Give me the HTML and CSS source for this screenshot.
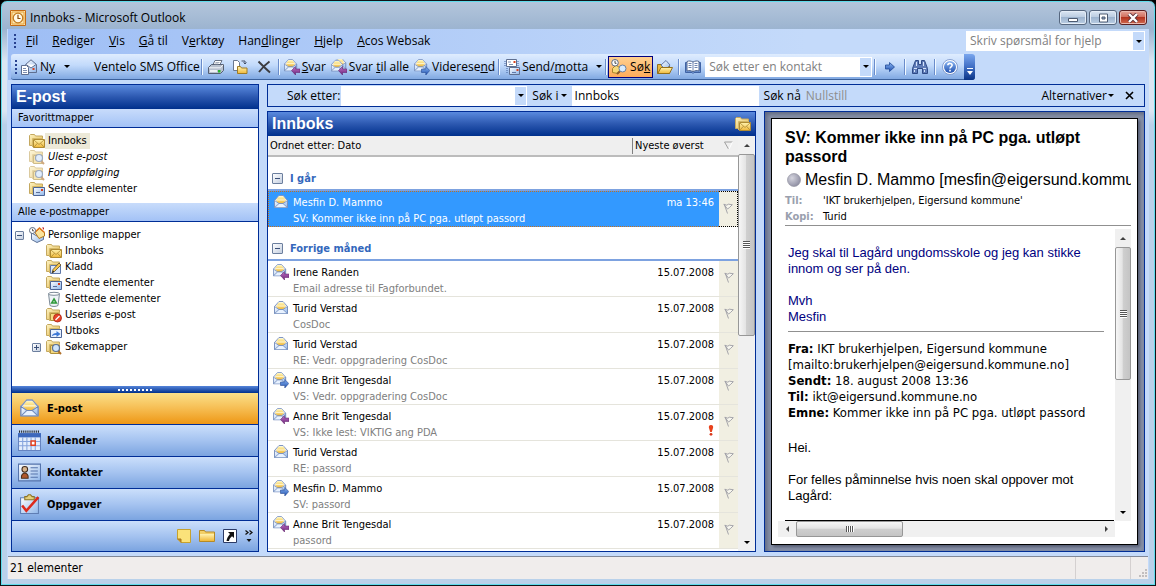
FILE: index.html
```html
<!DOCTYPE html>
<html lang="no">
<head>
<meta charset="utf-8">
<title>Innboks - Microsoft Outlook</title>
<link rel="stylesheet" href="styles.css">
</head>
<body>
<svg class="defs" aria-hidden="true">
  <defs>
    <linearGradient id="gFold" x1="0" y1="0" x2="1" y2="1"><stop offset="0" stop-color="#fdf3c4"/><stop offset="1" stop-color="#e5b94b"/></linearGradient>
    <linearGradient id="gGold" x1="0" y1="0" x2="0" y2="1"><stop offset="0" stop-color="#fff3b0"/><stop offset="1" stop-color="#f0b83a"/></linearGradient>
    <linearGradient id="gEnv" x1="0" y1="0" x2="1" y2="1"><stop offset="0" stop-color="#ffffff"/><stop offset="1" stop-color="#8fb6ea"/></linearGradient>
    <linearGradient id="gBlue" x1="0" y1="0" x2="0" y2="1"><stop offset="0" stop-color="#8db8f4"/><stop offset="1" stop-color="#1e4fae"/></linearGradient>
    <linearGradient id="gPurp" x1="0" y1="0" x2="0" y2="1"><stop offset="0" stop-color="#c078c8"/><stop offset="1" stop-color="#6c1f78"/></linearGradient>
    <radialGradient id="gBall" cx=".35" cy=".35" r=".7"><stop offset="0" stop-color="#d4d4de"/><stop offset="1" stop-color="#8e8ea2"/></radialGradient>
  </defs>
  <symbol id="folder" viewBox="0 0 16 16"><path d="M.5 12.500V2.500L1.500 1.500H5.500L6.500 3H13.500V12.500Z" fill="url(#gFold)" stroke="#c4a860"/><path d="M3.500 14V5.500H14" fill="none" stroke="#d4b868"/></symbol>
  <symbol id="f-mail" viewBox="0 0 16 16"><use href="#folder"/><path d="M4.500 6.500h11v8h-11z" fill="url(#gGold)" stroke="#b08c34"/><path d="M5 7l5 4.500L15 7M5 14.200l3.500-4M15 14.200l-3.500-4" fill="none" stroke="#b08c34" stroke-width=".8"/></symbol>
  <symbol id="f-sent" viewBox="0 0 16 16"><use href="#folder"/><path d="M4.500 6.500h11v8h-11z" fill="url(#gEnv)" stroke="#4d6596"/><path d="M12 8h2v2h-2z" fill="#d83a1e"/><path d="M7 11.500h4" stroke="#5b6f9c"/></symbol>
  <symbol id="f-out" viewBox="0 0 16 16"><use href="#folder"/><path d="M4.500 6.500h11v8h-11z" fill="#eaf2ff" stroke="#4d6596"/><path d="M5.500 13.500c1-3 2.500-3.500 5-3.500V8l4 3-4 3v-2c-2 0-3.500 0-5 1.500z" fill="#3d78d8"/></symbol>
  <symbol id="f-draft" viewBox="0 0 16 16"><use href="#folder"/><path d="M4.500 6.500h10v8h-10z" fill="#dbe7fb" stroke="#6078a8"/><path d="M6 14l1-3.500L13 4l2 2-6.500 6.500z" fill="#f7c64c" stroke="#5c4a2a" stroke-width=".8"/><path d="M6 14l1-2.500 1.300 1.300z" fill="#222"/></symbol>
  <symbol id="f-junk" viewBox="0 0 16 16"><use href="#folder"/><path d="M4.500 6.500h8v7h-8z" fill="#f7dc85" stroke="#b0923c"/><circle cx="11.500" cy="11" r="4" fill="#e8452a" stroke="#a82210" stroke-width=".8"/><path d="M9.500 13l4-4" stroke="#fff" stroke-width="1.300"/></symbol>
  <symbol id="f-find" viewBox="0 0 16 16"><use href="#folder"/><path d="M4.500 6.500h9v8h-9z" fill="#f3d780" stroke="#b0923c"/><path d="M12 12l3 3" stroke="#b0702a" stroke-width="2"/><circle cx="10" cy="9" r="3.500" fill="#cfe4fb" stroke="#5c7296" stroke-width="1.200"/></symbol>
  <symbol id="bin" viewBox="0 0 16 16"><path d="M2.500 2.500l1.500 12c2 1.300 6 1.300 8 0l1.500-12z" fill="#eef3f7" stroke="#7d8b98"/><ellipse cx="8" cy="2.800" rx="5.500" ry="1.500" fill="#fff" stroke="#7d8b98"/><path d="M8 8l2.300 4H5.700z" fill="none" stroke="#2f9a3a" stroke-width="1.600"/></symbol>
  <symbol id="home" viewBox="0 0 16 16"><path d="M2.500 6L8 9l6.500-3v6.500L8 15.500l-5.500-3z" fill="url(#gEnv)" stroke="#5f7396"/><path d="M6 5.500L10.500 1.500 15.500 5.500V9L10 11.500z" fill="#fbe39a" stroke="#b37a1e"/><path d="M5.500 5.500L10.500 1l5 4.500" fill="none" stroke="#e2761e" stroke-width="1.400"/><path d="M13 .5h2V3z" fill="#c02020"/><circle cx="3.500" cy="3.500" r="3" fill="#fff" stroke="#5c6a80"/><path d="M3.500 1.800v2H5" fill="none" stroke="#333" stroke-width=".8"/></symbol>
  <symbol id="env" viewBox="0 0 16 16"><path d="M1.500 6.500L6 1.500h4l4.500 5v7h-13z" fill="#f2f7ff" stroke="#7f96c4"/><path d="M3 6.500l2.500-4h5l2.500 4-3 3H6z" fill="url(#gGold)"/><path d="M3.500 6h9" stroke="#fff8d8"/><path d="M1.500 6.500L6 9.500h4l4.500-3v7h-13z" fill="url(#gEnv)" stroke="#6f88b8" stroke-width=".8"/><path d="M2 13.200L6 9.500h4l4 3.700" fill="#e8f2ff" stroke="#6f88b8" stroke-width=".8"/></symbol>
  <symbol id="env-re" viewBox="0 0 16 16"><svg x="-1" y="-1" width="15" height="15"><use href="#env"/></svg><path d="M7.500 11.500l4-4v2.500H16v3.500h-4.500V16z" fill="url(#gPurp)" stroke="#5a1666" stroke-width=".5"/></symbol>
  <symbol id="env-all" viewBox="0 0 16 16"><svg x="2" y="-2" width="14" height="14"><use href="#env"/></svg><svg x="-1" y="0" width="14" height="14"><use href="#env"/></svg><path d="M7.500 11.500l4-4v2.500H16v3.500h-4.500V16z" fill="url(#gPurp)" stroke="#5a1666" stroke-width=".5"/></symbol>
  <symbol id="env-fw" viewBox="0 0 16 16"><svg x="-1" y="-1" width="15" height="15"><use href="#env"/></svg><path d="M15.800 11.500l-4-4v2.500H7.500v3.500h4.300V16z" fill="url(#gBlue)" stroke="#163a86" stroke-width=".5"/></symbol>
  <symbol id="new" viewBox="0 0 16 16"><path d="M4.500 5.500L10 .8l5.500 4.700V13.500h-11z" fill="url(#gEnv)" stroke="#5f6f90"/><path d="M5 5.500l5 3.500 5-3.500" fill="#fff" stroke="#5f6f90"/><path d="M11.500 9h2v2h-2z" fill="#d8431e"/><path d="M.5 6.500h5l2 2v7h-7z" fill="#fff" stroke="#5f6f90"/><path d="M2 9.500h3M2 11.500h4M2 13.500h4" stroke="#7d8db0"/></symbol>
  <symbol id="print" viewBox="0 0 16 16"><path d="M4.500 6.500L7 1.500h7l-2.500 5z" fill="#fff" stroke="#6a7488"/><path d="M.5 8.500l3-3H15.500v6l-3 3H.5z" fill="#b9c1cf" stroke="#555f72"/><path d="M1 8.800h11.500l2.500-3" fill="none" stroke="#f4f6fa"/><path d="M2 12h7" stroke="#fff" stroke-width="1.500"/><path d="M10 11h2.500v2.500H10z" fill="#28b52c"/><path d="M7.500 3.500h4M6.500 5h4" stroke="#8f98aa" stroke-width=".8"/></symbol>
  <symbol id="move" viewBox="0 0 16 16"><path d="M1.500 1.500h4l2 2v8h-6z" fill="#fff" stroke="#6a7890"/><path d="M9.500 2h3.500v3M11.500 3.500l1.500 1.500L14.500 3.500" fill="none" stroke="#44506a"/><path d="M5.500 14.500v-7h3l1 1.500h5.500v5.500z" fill="url(#gGold)" stroke="#a07c24"/></symbol>
  <symbol id="del" viewBox="0 0 16 16"><path d="M2.500 2.500C6 6 10 10 14 13.500M13.500 2.500C10 5 6 9 3 13" stroke="#3c3c40" stroke-width="1.900" fill="none"/></symbol>
  <symbol id="sendrec" viewBox="0 0 16 16"><path d="M2.500 .5h10v7h-10z" fill="#fff" stroke="#5f6f90"/><path d="M9.500 2h2v2h-2z" fill="#d8431e"/><path d="M5 5.500h4M4 3h3" stroke="#8090b0"/><path d="M5.500 8.500h10v7h-10z" fill="url(#gEnv)" stroke="#5f6f90"/><path d="M12.500 10h2v2h-2z" fill="#d8431e"/><path d="M8 13.500h4" stroke="#6078a8"/><path d="M1 2v6M3 9v6M14 2v5" stroke="#3f5f9e" stroke-dasharray="1 1"/></symbol>
  <symbol id="find" viewBox="0 0 16 16"><path d="M1.500 9.500L5 6l4 3v4l-2 1.500-5.500-1z" fill="#f7d978" stroke="#a8842a"/><circle cx="4" cy="3.800" r="3.300" fill="#fff" stroke="#5c6a80"/><path d="M4 1.800v2.500h1.500" fill="none" stroke="#333" stroke-width=".9"/><path d="M9 12l-3 3" stroke="#8c5c2a" stroke-width="2"/><circle cx="11.500" cy="9.500" r="3.500" fill="#d8ecff" stroke="#6a80a0"/></symbol>
  <symbol id="open" viewBox="0 0 16 16"><path d="M.5 14.500v-9h4l1 1.500h7v7.500z" fill="#e8b840" stroke="#94701c"/><path d="M4 6l5-4.500L13 6l-4 5z" fill="url(#gEnv)" stroke="#6078a8"/><path d="M.8 14.500L4 8.500H15.500l-3 6z" fill="url(#gGold)" stroke="#94701c"/></symbol>
  <symbol id="book" viewBox="0 0 16 16"><path d="M.5 3.500h15v10H9L8 14.500 7 13.500H.5z" fill="#6a90d0" stroke="#3f62a4"/><path d="M2 2.500c2-1 4-.5 6 .5 2-1 4-1.500 6-.5v9.500c-2-.8-4-.5-6 .8-2-1.300-4-1.600-6-.8z" fill="#fff" stroke="#55698f"/><path d="M8 3v9.500M3.500 4.500h3M3.500 6.500h3M3.500 8.500h3M9.500 4.500h3M9.500 6.500h3M9.500 8.500h3" stroke="#6078a8" stroke-width=".9"/></symbol>
  <symbol id="go" viewBox="0 0 16 16"><path d="M3.500 6h4V3.500l5 4.500-5 4.500V10h-4z" fill="url(#gBlue)" stroke="#1e4796" stroke-width=".8"/></symbol>
  <symbol id="bino" viewBox="0 0 16 16"><path d="M3.500 1.500h3v4h3v-4h3l3 8v5h-5v-5h-5v5h-5v-5z" fill="#5f7cb8" stroke="#2f4a86"/><path d="M2 9.500h3M11 9.500h3M4.500 3v4M11.500 3v4M2.500 11v2M12.500 11v2" stroke="#d4e2fa"/></symbol>
  <symbol id="help" viewBox="0 0 16 16"><circle cx="8" cy="8" r="7.500" fill="#fff" stroke="#6f8cc4" stroke-width=".8"/><circle cx="8" cy="8" r="6" fill="url(#gBlue)"/><path d="M5.800 6.300c.2-2.600 4.400-2.400 4.300 0 0 1.500-2.100 1.500-2.100 3.200M8 10.800v1.600" fill="none" stroke="#fff" stroke-width="1.600"/></symbol>
  <symbol id="app" viewBox="0 0 16 16"><path d="M.5 .5h15v15H.5z" fill="#fbe6b0" stroke="#c46a14"/><path d="M2 2h12v12H2z" fill="none" stroke="#e9a13a"/><circle cx="8" cy="8" r="4.800" fill="#fff8e6" stroke="#c27a1e" stroke-width="1.300"/><path d="M8 4.800V8.500h2.500" fill="none" stroke="#8a4f10" stroke-width="1.200"/></symbol>
  <symbol id="flag" viewBox="0 0 10 12"><path d="M.8 2.200l3 1 1.500-1 4 .5-3 3-1.800 1.300zM1.500 3l3 8.500" fill="#f7f6ee" stroke="#9c9ca4" stroke-width=".9"/></symbol>
  <symbol id="cal" viewBox="0 0 22 20"><path d="M.5 3.500h21v16H.5z" fill="#e4eefc" stroke="#6684c0"/><path d="M0 3h22v4H0z" fill="#3d68bc"/><path d="M1 1.500h20" stroke="#222" stroke-width="2" stroke-dasharray="1 1"/><path d="M1 11h20M1 15h20M4.500 7v12M8.500 7v12M12.500 7v12M16.500 7v12" stroke="#86a4dc"/><path d="M12.500 10.500h4v4h-4z" fill="#fff" stroke="#e2401e" stroke-width="1.400"/></symbol>
  <symbol id="card" viewBox="0 0 22 18"><path d="M.5 1h21v16H.5z" fill="url(#gEnv)" stroke="#5674ac"/><circle cx="6.500" cy="6" r="2.700" fill="#d8b48c" stroke="#402a1c"/><path d="M3.300 14.500c-.8-6.500 7.200-6.500 6.400 0z" fill="#b0582c" stroke="#50301c"/><path d="M12 4.500h7M12 7.500h7M12 10.500h7M12 13.500h7" stroke="#5674ac"/></symbol>
  <symbol id="task" viewBox="0 0 20 20"><path d="M1.500 3.500h17v15h-17z" fill="url(#gEnv)" stroke="#5f7db4"/><path d="M5.500 5.500V2.500h2L9 .8h2l1.500 1.700h2v3z" fill="#e4cf7c" stroke="#8c7426"/><path d="M3 11l4 5L18.500 3" fill="none" stroke="#dd2a1c" stroke-width="2.400"/></symbol>
  <symbol id="note" viewBox="0 0 14 14"><path d="M.5 .5h13v13H4L.5 10z" fill="#fbe27a" stroke="#c7a22e"/><path d="M.5 10H4v3.500" fill="#c48a1c" stroke="#a8781c"/></symbol>
  <symbol id="fold2" viewBox="0 0 16 14"><path d="M.5 12.500v-11h5l1 1.500h9v9.500z" fill="#f2cf68" stroke="#b58a26"/><path d="M1 5h14v7H1z" fill="url(#gGold)"/></symbol>
  <symbol id="short" viewBox="0 0 14 14"><path d="M.5 .5h13v13H.5z" fill="#fff" stroke="#2b3a66"/><path d="M5 3h6v6L9 7.300C7 9 6.500 10 6 12H3.500C4 9 5 7.500 7 5z" fill="#111"/></symbol>
</svg>

<div class="window">
  <header class="titlebar">
    <svg class="i16"><use href="#app"/></svg>
    <h1 class="title">Innboks - Microsoft Outlook</h1>
    <div class="winbtns">
      <button class="wb" aria-label="Minimer"><svg viewBox="0 0 12 10"><path d="M1.500 5.500h9v3h-9z" fill="#fff" stroke="#4c5a70"/></svg></button>
      <button class="wb" aria-label="Gjenopprett"><svg viewBox="0 0 12 10"><path d="M2.500 1h8v8h-8z" fill="#fff" stroke="#4c5a70"/><path d="M5 4h3v2H5z" fill="#8fa6c4" stroke="#4c5a70"/></svg></button>
      <button class="wb close" aria-label="Lukk"><svg viewBox="0 0 12 10"><path d="M2 1l8 8M10 1L2 9" stroke="#5c3038" stroke-width="4"/><path d="M2 1l8 8M10 1L2 9" stroke="#fff" stroke-width="2.400"/></svg></button>
    </div>
  </header>

  <div class="client">
    <div class="menurow">
      <nav class="menu">
        <span class="grip"></span>
        <button><u>F</u>il</button><button><u>R</u>ediger</button><button><u>V</u>is</button><button><u>G</u>å til</button><button>V<u>e</u>rktøy</button><button>Han<u>d</u>linger</button><button><u>H</u>jelp</button><button><u>A</u>cos Websak</button>
      </nav>
      <div class="combo helpbox"><input type="text" aria-label="Hjelp" placeholder="Skriv spørsmål for hjelp"><button aria-label="Vis liste"><i class="dn"></i></button></div>
    </div>

    <div class="toolbar">
      <span class="grip"></span>
      <button class="tb new"><svg class="i16"><use href="#new"/></svg><span>N<u>y</u></span><i class="dn"></i></button>
      <button class="tb sms">Ventelo SMS Office</button>
      <span class="sep"></span>
      <button class="tb" aria-label="Skriv ut"><svg class="i16"><use href="#print"/></svg></button>
      <button class="tb" aria-label="Flytt"><svg class="i16"><use href="#move"/></svg></button>
      <button class="tb" aria-label="Slett"><svg class="i16"><use href="#del"/></svg></button>
      <span class="sep wide"></span>
      <button class="tb txt"><svg class="i16"><use href="#env-re"/></svg><span><u>S</u>var</span></button>
      <button class="tb txt"><svg class="i16"><use href="#env-all"/></svg><span>Svar <u>t</u>il alle</span></button>
      <button class="tb txt"><svg class="i16"><use href="#env-fw"/></svg><span>Viderese<u>n</u>d</span></button>
      <span class="sep"></span>
      <button class="tb txt"><svg class="i16"><use href="#sendrec"/></svg><span>Send/<u>m</u>otta</span><i class="dn"></i></button>
      <span class="sep"></span>
      <button class="tb on"><svg class="i16"><use href="#find"/></svg><span>Sø<u>k</u></span></button>
      <button class="tb" aria-label="Åpne"><svg class="i16"><use href="#open"/></svg></button>
      <span class="sep"></span>
      <button class="tb" aria-label="Adressebok"><svg class="i16"><use href="#book"/></svg></button>
      <div class="combo contact"><input type="text" aria-label="Kontakt" placeholder="Søk etter en kontakt"><button aria-label="Vis liste"><i class="dn"></i></button></div>
      <span class="sep"></span>
      <button class="tb" aria-label="Gå"><svg class="i16"><use href="#go"/></svg></button>
      <span class="sep"></span>
      <button class="tb" aria-label="Finn"><svg class="i16"><use href="#bino"/></svg></button>
      <span class="sep"></span>
      <button class="tb" aria-label="Hjelp"><svg class="i16"><use href="#help"/></svg></button>
      <button class="cap" aria-label="Alternativer for verktøylinje"><svg viewBox="0 0 8 10"><path d="M1 1.500h6" stroke="#fff"/><path d="M1 4h6L4 8z" fill="#fff"/></svg></button>
    </div>

    <main class="main">
      <aside class="nav">
        <h2 class="bar">E-post</h2>
        <h3 class="sub">Favorittmapper</h3>
        <ul class="tree fav">
          <li class="sel"><svg class="i16"><use href="#f-mail"/></svg><a href="#">Innboks</a></li>
          <li class="dim"><svg class="i16"><use href="#f-find"/></svg><a href="#">Ulest e-post</a></li>
          <li class="dim"><svg class="i16"><use href="#f-find"/></svg><a href="#">For oppfølging</a></li>
          <li><svg class="i16"><use href="#f-sent"/></svg><a href="#">Sendte elementer</a></li>
        </ul>
        <h3 class="sub">Alle e-postmapper</h3>
        <ul class="tree all">
          <li class="root"><button class="pm" aria-label="Skjul"></button><svg class="i16"><use href="#home"/></svg><a href="#">Personlige mapper</a></li>
          <li><svg class="i16"><use href="#f-mail"/></svg><a href="#">Innboks</a></li>
          <li><svg class="i16"><use href="#f-draft"/></svg><a href="#">Kladd</a></li>
          <li><svg class="i16"><use href="#f-sent"/></svg><a href="#">Sendte elementer</a></li>
          <li><svg class="i16"><use href="#bin"/></svg><a href="#">Slettede elementer</a></li>
          <li><svg class="i16"><use href="#f-junk"/></svg><a href="#">Useriøs e-post</a></li>
          <li><svg class="i16"><use href="#f-out"/></svg><a href="#">Utboks</a></li>
          <li class="exp"><button class="pm plus" aria-label="Vis"></button><svg class="i16"><use href="#f-find"/></svg><a href="#">Søkemapper</a></li>
        </ul>
        <div class="split"><span></span></div>
        <button class="mod active"><svg><use href="#env"/></svg>E-post</button>
        <button class="mod"><svg><use href="#cal"/></svg>Kalender</button>
        <button class="mod"><svg><use href="#card"/></svg>Kontakter</button>
        <button class="mod"><svg><use href="#task"/></svg>Oppgaver</button>
        <div class="modfoot">
          <button aria-label="Notater"><svg width="14" height="14"><use href="#note"/></svg></button>
          <button aria-label="Mappeliste"><svg width="16" height="14"><use href="#fold2"/></svg></button>
          <button aria-label="Snarveier"><svg width="14" height="14"><use href="#short"/></svg></button>
          <button aria-label="Konfigurer"><svg width="8" height="14" viewBox="0 0 8 14"><path d="M.5 1.500l2.500 2-2.500 2M4.500 1.500l2.500 2-2.500 2" fill="none" stroke="#111" stroke-width="1.300"/><path d="M1.500 10h5L4 13z" fill="#111"/></svg></button>
        </div>
      </aside>

      <section class="right">
        <form class="search">
          <label for="q">Søk etter:</label>
          <div class="combo q"><input id="q" type="text"><button type="button" aria-label="Vis liste"><i class="dn"></i></button></div>
          <label for="in" class="inl">Søk i<i class="dn"></i></label>
          <input id="in" class="scope" type="text" value="Innboks">
          <button type="button">Søk nå</button>
          <button type="button" disabled>Nullstill</button>
          <button type="button" class="opts">Alternativer<i class="dn"></i></button>
          <button type="button" class="x" aria-label="Lukk søk"><svg width="9" height="9" viewBox="0 0 9 9"><path d="M1 1l7 7M8 1L1 8" stroke="#000" stroke-width="1.600"/></svg></button>
        </form>

        <div class="panes">
          <section class="list">
            <h2 class="bar">Innboks<svg class="i16"><use href="#f-mail"/></svg></h2>
            <div class="listbody">
              <div class="cols">
                <div class="sort"><button>Ordnet etter: Dato</button><button class="newest">Nyeste øverst<svg width="9" height="9" viewBox="0 0 9 9"><path d="M8.500 1h-8L4.500 8" fill="none" stroke="#a0a0a0"/><path d="M5 8L8.500 1" stroke="#fff"/></svg></button></div>
                <h3 class="group"><button class="pm" aria-label="Skjul"></button>I går</h3>
                <ul class="msgs">
                  <li class="msg cur"><svg class="i16"><use href="#env"/></svg><a href="#"><b>Mesfin D. Mammo</b><time>ma 13:46</time><span>SV: Kommer ikke inn på PC pga. utløpt passord</span></a><button class="fl" aria-label="Flagg"><svg><use href="#flag"/></svg></button></li>
                </ul>
                <h3 class="group"><button class="pm" aria-label="Skjul"></button>Forrige måned</h3>
                <ul class="msgs">
                  <li class="msg"><svg class="i16"><use href="#env-re"/></svg><a href="#"><b>Irene Randen</b><time>15.07.2008</time><span>Email adresse til Fagforbundet.</span></a><button class="fl" aria-label="Flagg"><svg><use href="#flag"/></svg></button></li>
                  <li class="msg"><svg class="i16"><use href="#env"/></svg><a href="#"><b>Turid Verstad</b><time>15.07.2008</time><span>CosDoc</span></a><button class="fl" aria-label="Flagg"><svg><use href="#flag"/></svg></button></li>
                  <li class="msg"><svg class="i16"><use href="#env"/></svg><a href="#"><b>Turid Verstad</b><time>15.07.2008</time><span>RE: Vedr. oppgradering CosDoc</span></a><button class="fl" aria-label="Flagg"><svg><use href="#flag"/></svg></button></li>
                  <li class="msg"><svg class="i16"><use href="#env-fw"/></svg><a href="#"><b>Anne Brit Tengesdal</b><time>15.07.2008</time><span>VS: Vedr. oppgradering CosDoc</span></a><button class="fl" aria-label="Flagg"><svg><use href="#flag"/></svg></button></li>
                  <li class="msg"><svg class="i16"><use href="#env-re"/></svg><a href="#"><b>Anne Brit Tengesdal</b><time>15.07.2008</time><span>VS: Ikke lest: VIKTIG ang PDA</span><svg class="imp" viewBox="0 0 6 11"><path d="M3 0C5 0 5.500 1.500 5 3L3.800 7H2.200L1 3C.5 1.500 1 0 3 0z" fill="#e8421c"/><circle cx="3" cy="9.300" r="1.400" fill="#d8381c"/></svg></a><button class="fl" aria-label="Flagg"><svg><use href="#flag"/></svg></button></li>
                  <li class="msg"><svg class="i16"><use href="#env"/></svg><a href="#"><b>Turid Verstad</b><time>15.07.2008</time><span>RE: passord</span></a><button class="fl" aria-label="Flagg"><svg><use href="#flag"/></svg></button></li>
                  <li class="msg"><svg class="i16"><use href="#env-fw"/></svg><a href="#"><b>Mesfin D. Mammo</b><time>15.07.2008</time><span>SV: passord</span></a><button class="fl" aria-label="Flagg"><svg><use href="#flag"/></svg></button></li>
                  <li class="msg"><svg class="i16"><use href="#env-re"/></svg><a href="#"><b>Anne Brit Tengesdal</b><time>15.07.2008</time><span>passord</span></a><button class="fl" aria-label="Flagg"><svg><use href="#flag"/></svg></button></li>
                </ul>
              </div>
              <div class="vsb"><button aria-label="Opp"><i class="up"></i></button><div class="thumb t1"><span></span></div><button aria-label="Ned"><i class="dn"></i></button></div>
            </div>
          </section>

          <section class="preview">
            <article class="paper">
              <header class="mhead">
                <h2>SV: Kommer ikke inn på PC pga. utløpt passord</h2>
                <p class="from"><svg viewBox="0 0 14 14"><circle cx="7" cy="7" r="6.500" fill="url(#gBall)" stroke="#8a8a98" stroke-width=".6"/></svg><span>Mesfin D. Mammo [mesfin@eigersund.kommune.no]</span></p>
                <dl><dt>Til:</dt><dd>'IKT brukerhjelpen, Eigersund kommune'</dd><dt>Kopi:</dt><dd>Turid</dd></dl>
              </header>
              <div class="mwrap">
                <div class="mbody">
                  <div class="blue"><p>Jeg skal til Lagård ungdomsskole og jeg kan stikke innom og ser på den.</p><p>Mvh<br>Mesfin</p></div>
                  <hr>
                  <p class="tah"><b>Fra:</b> IKT brukerhjelpen, Eigersund kommune<br>[mailto:brukerhjelpen@eigersund.kommune.no]<br><b>Sendt:</b> 18. august 2008 13:36<br><b>Til:</b> ikt@eigersund.kommune.no<br><b>Emne:</b> Kommer ikke inn på PC pga. utløpt passord</p>
                  <p class="hei">Hei.</p>
                  <p>For felles påminnelse hvis noen skal oppover mot Lagård:</p>
                </div>
                <div class="vsb"><button aria-label="Opp"><i class="up"></i></button><div class="thumb t2"><span></span></div><button aria-label="Ned"><i class="dn"></i></button></div>
              </div>
              <div class="hsb"><button aria-label="Venstre"><i class="lf"></i></button><div class="thumb h"><span></span></div><button aria-label="Høyre"><i class="rt"></i></button></div>
            </article>
          </section>
        </div>
      </section>
    </main>

    <footer class="status"><span>21 elementer</span><i class="cell"></i><i class="cell last"><svg width="10" height="10" viewBox="0 0 10 10"><path d="M7 0h2v2H7zM7 3h2v2H7zM7 6h2v2H7zM4 3h2v2H4zM4 6h2v2H4zM1 6h2v2H1z" fill="#c2bebe"/></svg></i></footer>
  </div>
</div>
</body>
</html>
```
FILE: styles.css
```css
:root {
  --ui: "Open Sans", "Noto Sans", sans-serif;
  --tah: "DejaVu Sans Condensed", "DejaVu Sans", sans-serif;
  --ari: "Liberation Sans", Arial, sans-serif;
  --line: #002d96;
}
* { box-sizing: border-box; }
body, h1, h2, h3, p, ul, dl, dd { margin: 0; padding: 0; }
ul { list-style: none; }
body { height: 100vh; overflow: hidden; background: #000; font: 11px/16px var(--tah); color: #000; }
button { border: 0; padding: 0; background: none; font: inherit; color: inherit; white-space: nowrap; }
input { border: 0; padding: 0 3px; margin: 0; font: inherit; background: #fff; min-width: 0; border-radius: 0; }
input::placeholder { color: #808080; opacity: 1; }
a { color: inherit; text-decoration: none; }
svg { display: block; flex: none; overflow: hidden; }
.defs { position: absolute; width: 0; height: 0; }
.i16 { width: 16px; height: 16px; }

.dn, .up, .lf, .rt { display: block; flex: none; border: 3px solid transparent; }
.dn { border-top-color: #000; border-bottom-width: 0; }
.up { border-bottom-color: #404040; border-top-width: 0; }
.lf { border-right-color: #404040; border-left-width: 0; }
.rt { border-left-color: #404040; border-right-width: 0; }

/* window frame */
.window { height: 100vh; display: flex; flex-direction: column; padding: 0 6px 6px; border: 1px solid #101418; border-radius: 7px 7px 0 0; background: linear-gradient(#b4c6dc, #9cb4d0 28px, #dbe6f2 60px, #dbe6f2 110px, #b9d1ea 124px); box-shadow: inset 0 0 0 1px #5fdcec; }
.titlebar { height: 28px; flex: none; display: flex; align-items: center; padding: 5px 2px 0 3px; gap: 4px; }
.title { flex: 1; font: 12px/16px var(--ui); }
.winbtns { display: flex; gap: 2px; }
.wb { width: 28px; height: 15px; display: flex; align-items: center; justify-content: center; border: 1px solid #56677f; border-radius: 3px; background: linear-gradient(#dbe6f3, #b9cbe0 50%, #9db4cf 50%, #bccfe4); box-shadow: inset 0 0 0 1px #e4edf7; }
.wb svg { width: 12px; height: 10px; }
.wb.close { background: linear-gradient(#e6a59b, #cf6a58 50%, #b43420 50%, #cf6a50); border-color: #5a1e20; box-shadow: inset 0 0 0 1px #eab8ae; }
.client { flex: 1; min-height: 0; display: flex; flex-direction: column; border: 1px solid #c4dafa; border-width: 0 1px; background: linear-gradient(90deg, #9ebef5, #c4dafa 70%); }

/* menu */
.menurow { height: 25px; flex: none; display: flex; justify-content: space-between; align-items: flex-start; font: 12px/16px var(--ui); }
.menu { display: flex; align-items: center; height: 24px; padding-left: 6px; }
.menu button { padding: 0 7px; }
.grip { width: 2px; height: 14px; margin-right: 3px; background: repeating-linear-gradient(#27418f 0 2px, transparent 2px 4px); }
.combo { display: flex; background: #fff; border: 1px solid #fff; }
.combo input { flex: 1; }
.combo button { width: 11px; background: #c4dafa; display: flex; align-items: center; justify-content: center; }
.helpbox { width: 179px; height: 20px; margin: 2px 3px 0 0; }

/* toolbar */
.toolbar { height: 26px; flex: none; align-self: flex-start; margin-left: 3px; display: flex; align-items: center; padding-left: 3px; border-radius: 3px; border-bottom: 1px solid #3b619c; background: linear-gradient(#dfecfe, #c2dafb 45%, #81a9e2); font: 12px/16px var(--ui); }
.toolbar .grip { margin: 0 2px 0 1px; }
.tb { height: 22px; display: flex; align-items: center; gap: 3px; padding: 0 4px; }
.tb .dn { margin: 0 4px 0 6px; }
.tb.new { padding-left: 2px; }
.tb.sms { padding: 0 0 0 16px; }
.tb.txt { padding: 0 2px 0 3px; gap: 2px; }
.tb.txt .dn { margin-right: 0; }
.tb.on { padding: 0 2px; border: 1px solid #000080; background: linear-gradient(#ffd08f, #feab5a); }
.sep { width: 2px; height: 16px; margin: 0 1px; border-left: 1px solid #6a8ccb; border-right: 1px solid #f1f9ff; }
.sep.wide { margin-left: 2px; }
.contact { width: 167px; height: 20px; }
.contact ~ .sep { margin: 0 2px; }
.cap { width: 11px; align-self: stretch; margin: 0 0 -1px 2px; display: flex; align-items: flex-end; justify-content: center; padding-bottom: 3px; border-radius: 0 3px 3px 0; background: linear-gradient(#7aa6ee, #3f6ec4 50%, #0a3486); }
.cap svg { width: 8px; height: 10px; }

/* main area */
.main { flex: 1; min-height: 0; display: flex; gap: 8px; padding: 4px 3px; background: #c4dafa; }
.bar { flex: none; height: 24px; padding: 0 4px; display: flex; align-items: center; justify-content: space-between; font: bold 16px/24px var(--ari); color: #fff; background: linear-gradient(#5a8ade, #2c58b0 50%, #00308c); }
.nav { width: 248px; flex: none; display: flex; flex-direction: column; border: 1px solid var(--line); background: #fff; }
.sub { flex: none; height: 19px; padding-left: 6px; font: 11px/18px var(--tah); border-bottom: 1px solid var(--line); background: linear-gradient(#c8dcfb, #a3c2f6); }
.tree { padding: 5px 0 5px 17px; }
.tree li { display: flex; align-items: center; height: 16px; }
.tree a { padding: 0 3px; }
.fav { height: 75px; }
.sel a { background: #ece9d8; }
.dim a { font-style: italic; }
.dim svg { opacity: .6; }
.all { flex: 1; min-height: 0; padding-left: 34px; }
.all .exp { margin-left: -14px; }
.all .root { margin-left: -31px; }
.pm { width: 9px; height: 9px; flex: none; margin-right: 5px; border: 1px solid #6c7f9e; border-radius: 1px; background: linear-gradient(#3b5078, #3b5078) center/5px 1px no-repeat, linear-gradient(135deg, #fff, #c4cfe0); }
.pm.plus { background: linear-gradient(#3b5078, #3b5078) center/5px 1px no-repeat, linear-gradient(#3b5078, #3b5078) center/1px 5px no-repeat, linear-gradient(135deg, #fff, #c4cfe0); }
.split { height: 7px; flex: none; display: flex; justify-content: center; align-items: center; background: linear-gradient(#5585da, #00308c); }
.split span { width: 35px; height: 2px; background: repeating-linear-gradient(90deg, #fff 0 2px, transparent 2px 4px); }
.mod { flex: none; height: 32px; display: flex; align-items: center; gap: 6px; padding-left: 6px; font: bold 11px/16px var(--tah); border-bottom: 1px solid var(--line); background: linear-gradient(#cbdffb, #a5c3f0 50%, #7ba4e0); }
.mod svg { width: 23px; height: 21px; }
.mod.active { background: linear-gradient(#fbe08a, #f6bd52 50%, #ee9715); }
.modfoot { flex: none; height: 30px; display: flex; align-items: center; justify-content: flex-end; gap: 8px; padding-right: 5px; background: linear-gradient(#cbdffb, #a5c3f0 50%, #7ba4e0); }

/* search bar */
.right { flex: 1; min-width: 0; display: flex; flex-direction: column; gap: 4px; }
.search { height: 23px; flex: none; display: flex; align-items: center; gap: 5px; padding: 0 10px 0 19px; border: 1px solid var(--line); font: 12px/16px var(--ui); }
.q { width: 186px; height: 20px; margin-left: -4px; }
.inl { display: flex; align-items: center; gap: 2px; }
.scope { width: 187px; height: 20px; }
.search button:disabled { color: #8d8d8d; }
.opts { margin-left: auto; display: flex; align-items: center; gap: 1px; }
.x { margin-left: 6px; }

.panes { flex: 1; min-height: 0; display: grid; grid-template-columns: 489fr 381fr; gap: 8px; }
.list { display: flex; flex-direction: column; min-width: 0; min-height: 0; border: 1px solid var(--line); background: #fff; }
.listbody { flex: 1; min-height: 0; display: flex; }
.listbody .vsb { width: 17px; }
.cols { flex: 1; min-width: 0; overflow: hidden; }
.sort { height: 21px; display: flex; align-items: center; padding: 0 3px 0 2px; background: #efefef; border-bottom: 2px solid #bcbcbc; }
.sort button { line-height: 16px; }
.newest { width: 103px; margin-left: auto; display: flex; align-items: center; justify-content: space-between; padding: 0 2px; border-left: 1px solid #808080; }
.group { height: 34px; display: flex; align-items: center; padding: 11px 0 0 4px; font: bold 11px/16px var(--tah); color: #3468bc; border-bottom: 2px solid #7da2e0; }
.group .pm { width: 11px; height: 11px; margin-right: 7px; }
.msg { height: 36px; display: flex; border-bottom: 1px solid #e5e4dc; }
.msg > .i16 { margin: 3px 0 0 5px; }
.msg a { flex: 1; min-width: 0; display: grid; grid-template-columns: 1fr auto; grid-auto-rows: 16px; align-content: start; padding: 4px 5px 0 4px; }
.msg b { font-weight: normal; }
.msg span { color: #808080; white-space: nowrap; }
.imp { width: 6px; height: 11px; justify-self: end; }
.fl { width: 19px; display: flex; align-items: center; justify-content: center; padding-bottom: 3px; background: #f1efe2; }
.fl svg { width: 10px; height: 12px; }
.cur { border: 0; background: repeating-linear-gradient(90deg, #c8701c 0 1px, #3399ff 1px 2px) top/100% 1px no-repeat, repeating-linear-gradient(90deg, #c8701c 0 1px, #3399ff 1px 2px) bottom/100% 1px no-repeat, repeating-linear-gradient(#c8701c 0 1px, #3399ff 1px 2px) left/1px 100% no-repeat, #3399ff; }
.cur, .cur span { color: #fff; }
.cur .fl { border: 1px dotted #000; border-left: 0; color: #000; }

/* scroll bars */
.vsb { width: 16px; flex: none; display: flex; flex-direction: column; background: #f0f0f0; }
.vsb button { height: 18px; flex: none; display: flex; align-items: center; justify-content: center; }
.vsb button:last-child { margin-top: auto; }
.thumb { display: flex; align-items: center; justify-content: center; border: 1px solid #979797; border-radius: 2px; background: linear-gradient(90deg, #f6f6f6, #e4e4e4 45%, #cfcfcf 50%, #c4c4c4); }
.thumb span { width: 7px; height: 8px; background: repeating-linear-gradient(#555 0 1px, #fff 1px 2px); }
.t1 { height: 182px; }
.t2 { height: 133px; }
.hsb { height: 16px; flex: none; display: flex; margin: 0 16px 0 -7px; background: #f0f0f0; }
.hsb button { width: 18px; display: flex; align-items: center; justify-content: center; }
.hsb button:last-child { margin-left: auto; }
.thumb.h { width: 107px; background: linear-gradient(#f6f6f6, #e4e4e4 45%, #cfcfcf 50%, #c4c4c4); }
.thumb.h span { width: 8px; height: 6px; background: repeating-linear-gradient(90deg, #555 0 1px, #fff 1px 2px); }

/* reading pane */
.preview { min-width: 0; min-height: 0; display: flex; padding: 6px; border: 1px solid var(--line); background: #8a93a9; box-shadow: inset 2px 2px 5px #5c667e; }
.paper { flex: 1; min-width: 0; display: flex; flex-direction: column; padding: 9px 6px 7px 13px; border: 1px solid #000; background: #fff; box-shadow: 2px 2px 3px #525a70; }
.mhead { flex: none; border-bottom: 1px solid #909090; margin-bottom: 3px; }
.mhead h2 { font: bold 16px/19px var(--ari); }
.from { height: 27px; display: flex; align-items: center; gap: 4px; overflow: hidden; white-space: nowrap; font: 16px/24px var(--ari); }
.from svg { width: 14px; height: 14px; margin-left: 2px; }
.mhead dl { display: grid; grid-template-columns: 38px 1fr; }
.mhead dt { font-weight: bold; color: #9aa0ae; }
.mwrap { flex: 1; min-height: 0; display: flex; }
.mbody { flex: 1; min-width: 0; overflow: hidden; padding: 16px 10px 0 3px; margin-right: 1px; border-bottom: 1px solid #000; font: 13px/16px var(--ari); }
.mbody p { margin-bottom: 16px; }
.blue { color: #000080; }
.mbody hr { margin: -10px 0 9px; border: 0; border-top: 1px solid #909090; }
.mbody .tah { font: 13px/16px var(--tah); white-space: nowrap; }
.mbody .hei { margin-top: 19px; }

.status { height: 23px; flex: none; display: flex; align-items: center; padding-left: 2px; border-top: 1px solid #808898; background: #f0edec; font: 12px/16px var(--tah); }
.status span { flex: 1; }
.cell { width: 55px; height: 100%; border-left: 1px solid #d4d0d0; }
.cell.last { width: 18px; display: flex; align-items: flex-end; justify-content: flex-end; }
```
